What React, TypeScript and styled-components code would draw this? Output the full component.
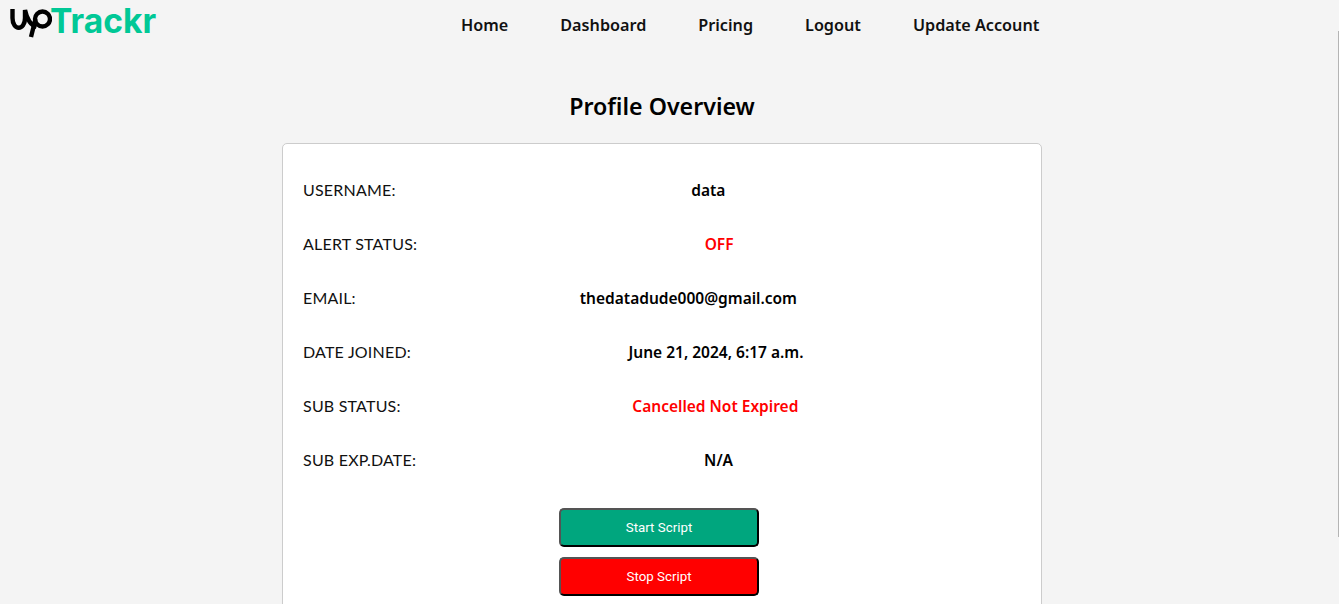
import styled, {createGlobalStyle} from 'styled-components';

const GlobalStyle = createGlobalStyle`
  * {
    box-sizing: border-box;
  }
  html, body {
    margin: 0;
    padding: 0;
    height: 604px;
    overflow: hidden;
    background-color: #f4f4f4;
    font-family: 'Noto Sans', 'Lato', sans-serif;
    color: #000;
  }
`;
const Page = styled.div`
  width: 1324px;
  height: 604px;
  overflow: hidden;
`;
const ScrollThumb = styled.div`
  position: fixed;
  top: 31px;
  right: 0;
  width: 1px;
  height: 506px;
  background-color: #b4b4b4;
`;
const Navbar = styled.nav`
  display: flex;
  height: 50px;
  padding-left: 10px;
`;
const Brand = styled.div`
  display: flex;
  align-items: flex-start;
  width: 425px;
  padding-top: 3px;
`;
const BrandName = styled.span`
  font-family: 'Inter', sans-serif;
  font-weight: 700;
  font-size: 33.6px;
  line-height: 36px;
  margin-left: -2px;
  color: #00c896;
`;
const NavLinks = styled.div`
  display: flex;
  gap: 52px;
  padding: 15px 0 0 26px;
`;
const NavLink = styled.a`
  font-size: 16.2px;
  line-height: 20px;
  font-weight: 600;
  color: #111;
`;
const Title = styled.h1`
  margin: 41px 0 22px;
  font-size: 23.2px;
  line-height: 30px;
  font-weight: 600;
  text-align: center;
`;
const Card = styled.section`
  width: 760px;
  height: 600px;
  margin-left: 282px;
  padding: 19px 20px 0;
  background-color: #fff;
  border: 1px solid #ccc;
  border-radius: 5px;
`;
const Row = styled.div`
  display: flex;
  justify-content: space-between;
  height: 54px;
  align-items: center;
`;
const Label = styled.span`
  margin-bottom: 2px;
  font-family: 'Lato', 'Noto Sans', sans-serif;
  font-size: 16px;
  letter-spacing: 0.2px;
  color: #111;
`;
const Value = styled.span<{$alert?: boolean; $shift?: number}>`
  margin-left: ${props => props.$shift || 0}px;
  font-size: 15.5px;
  font-weight: 600;
  color: ${props => (props.$alert ? '#ff0000' : '#000')};
`;
const Actions = styled.div`
  display: flex;
  flex-direction: column;
  align-items: center;
  gap: 10px;
  padding: 21px 6px 0 0;
`;
const ScriptButton = styled.button<{$stop?: boolean}>`
  width: 200px;
  height: 39px;
  border: 2px outset #000;
  border-radius: 5px;
  background-color: ${props => (props.$stop ? '#ff0000' : '#00a67e')};
  color: #fff;
  font-family: 'Roboto', 'Liberation Sans', Arial, sans-serif;
  font-size: 13.33px;
`;

const rows = [
  {label: 'USERNAME:', value: 'data'},
  {label: 'ALERT STATUS:', value: 'OFF', alert: true},
  {label: 'EMAIL:', value: 'thedatadude000@gmail.com'},
  {label: 'DATE JOINED:', value: 'June 21, 2024, 6:17 a.m.'},
  {label: 'SUB STATUS:', value: 'Cancelled Not Expired', alert: true, shift: 9},
  {label: 'SUB EXP.DATE:', value: 'N/A'},
];

function Logo() {
  return (
    <svg width="42" height="36" viewBox="0 0 42 36" fill="none" stroke="#000" strokeWidth="4.4">
      <path d="M2.5 6 V15 C2.5 28 15 28 15 15 V7 C16.5 14 20 22 26.5 24" />
      <circle cx="32.5" cy="16" r="7.5" />
      <path d="M25.5 16 L21 34" />
    </svg>
  );
}

function App() {
  return (
    <Page>
      <GlobalStyle />
      <ScrollThumb />
      <Navbar>
        <Brand>
          <Logo />
          <BrandName>Trackr</BrandName>
        </Brand>
        <NavLinks>
          <NavLink>Home</NavLink>
          <NavLink>Dashboard</NavLink>
          <NavLink>Pricing</NavLink>
          <NavLink>Logout</NavLink>
          <NavLink>Update Account</NavLink>
        </NavLinks>
      </Navbar>
      <Title>Profile Overview</Title>
      <Card>
        {rows.map(r => (
          <Row key={r.label}>
            <Label>{r.label}</Label>
            <Value $alert={r.alert} $shift={r.shift}>{r.value}</Value>
            <span />
          </Row>
        ))}
        <Actions>
          <ScriptButton>Start Script</ScriptButton>
          <ScriptButton $stop>Stop Script</ScriptButton>
        </Actions>
      </Card>
    </Page>
  );
}
export default App;
